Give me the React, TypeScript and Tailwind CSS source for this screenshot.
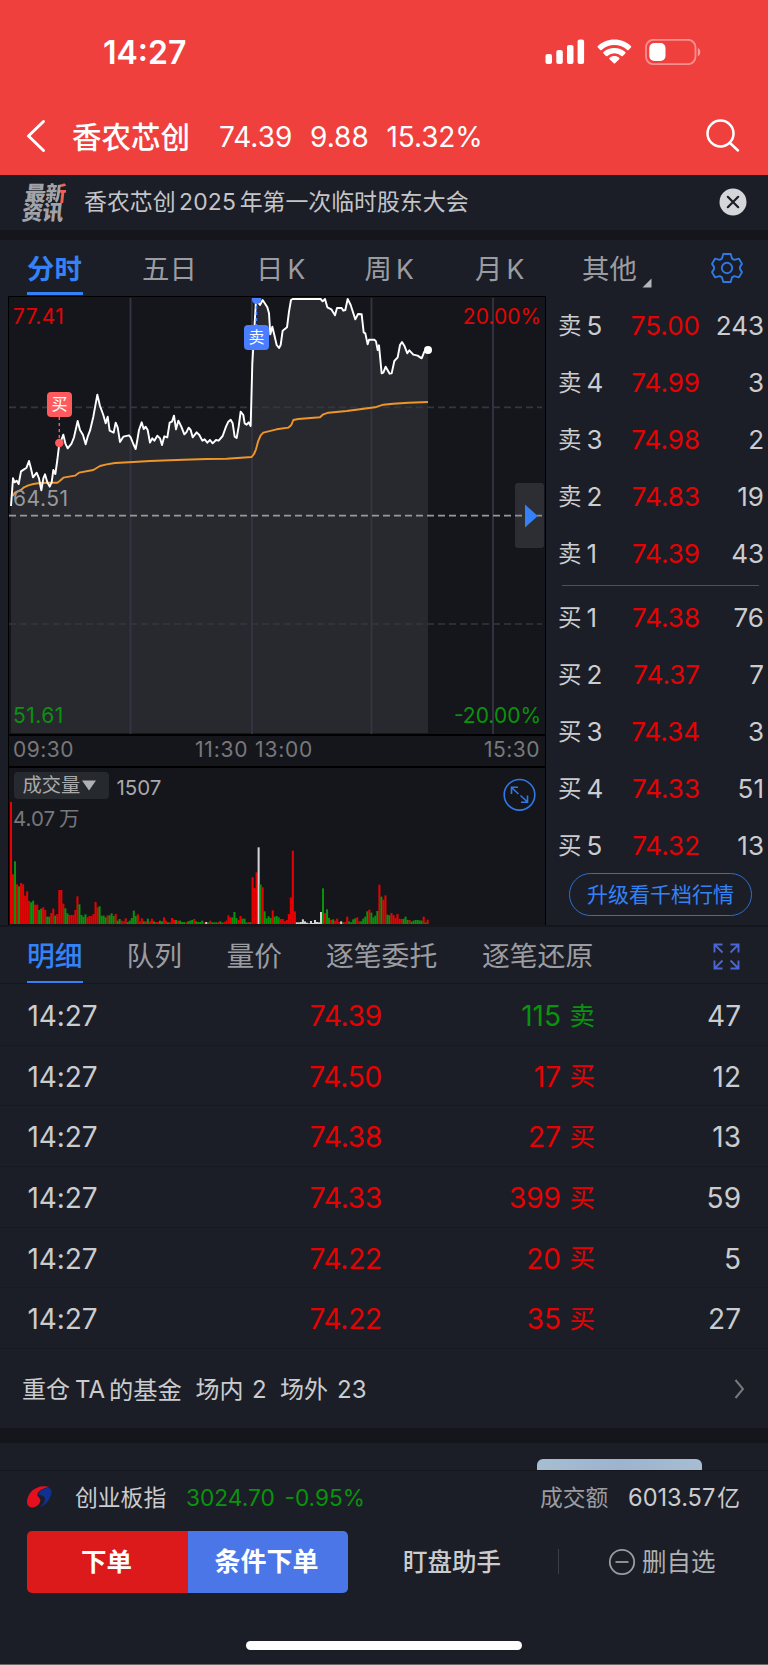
import type { ReactNode } from "react";

type Tone = "r" | "g" | "w";

const TONES: Record<Tone, string> = { r: "#e60202", g: "#0a930d", w: "#d3d4d6" };

/* Plot units are a third of a pixel. */
const PRICE =
  "33,828 39,745 44,757 50,752 56,762 63,724 72,718 79,714 87,693 92,712 99,742 110,728 117,745 124,781 130,745 135,733 142,757 149,770 155,757 160,720 166,732 172,690 178,640 184,630 190,614 196,640 203,655 214,642 222,622 233,573 240,600 245,608 249,615 257,643 263,620 270,602 280,560 292,494 300,528 310,555 317,580 323,560 329,602 341,608 347,578 353,592 360,636 370,620 387,616 392,622 400,642 407,657 412,630 417,600 425,577 431,597 437,590 443,600 450,638 457,625 463,632 472,617 480,625 486,645 493,619 502,622 509,578 516,575 522,557 528,598 535,572 544,590 553,613 559,607 566,593 572,600 578,622 590,607 598,615 607,632 614,628 622,638 630,630 638,640 648,630 656,632 668,618 678,590 685,575 692,569 698,580 704,620 710,624 716,590 722,545 730,555 734,580 740,584 746,577 752,588 757,400 760,350 768,210 780,225 788,210 802,232 807,250 811,313 817,290 823,315 830,345 837,354 842,345 848,302 861,292 867,245 873,210 878,207 962,207 968,214 975,207 982,232 994,238 1005,256 1011,234 1025,234 1030,242 1036,240 1043,207 1052,225 1066,268 1074,252 1085,253 1091,307 1096,310 1103,343 1107,329 1123,329 1128,334 1133,360 1137,346 1145,430 1150,428 1157,410 1169,431 1175,430 1183,393 1193,382 1200,345 1206,336 1213,347 1222,370 1228,361 1240,374 1253,377 1265,385 1273,365 1284,359";
const AVERAGE =
  "38,798 45,788 63,780 72,772 85,766 100,762 120,759 150,758 172,758 180,752 190,743 225,737 237,728 280,720 300,708 320,703 345,699 400,696 450,693 550,689 620,687 680,686 755,681 762,672 768,658 774,635 782,616 790,608 830,598 865,593 874,585 880,570 895,567 960,562 970,553 985,548 1040,543 1125,532 1150,524 1180,521 1225,518 1284,516";

const VOLUME =
  "r366 r149 g188 r119 g113 r123 r119 r85 r98 r69 g65 g70 r58 r58 g42 g46 r50 r42 g22 g22 r33 r46 g25 r30 r102 r102 r61 g47 g32 r27 r27 r27 r42 r83 g59 g27 g22 g29 r20 r24 r24 r30 r66 r50 g53 g25 g25 g20 r26 g26 g32 g24 r30 g10 g15 r10 r8 r17 g6 g10 g18 g40 g24 r29 r8 r17 g8 r8 g16 r8 r16 g8 r6 r6 g10 g8 r20 r10 g5 r5 r18 r12 g12 r10 g10 g6 g6 r5 g8 g10 g12 r15 g8 g6 g6 g10 r5 w6 g5 r10 g5 g5 g5 r6 g8 g4 r6 r10 r26 r20 g20 g36 g18 r12 r24 g16 g16 g5 r6 g5 r140 r108 r155 w230 g118 r110 g38 g17 g23 g18 r41 g22 g24 g20 r15 r15 r9 r12 r30 r80 r220 r38 w5 w5 w6 w14 w8 w4 w2 w9 w3 w12 w6 w5 w36 g107 r33 g44 g18 r12 g14 r10 r16 r6 w8 g5 r6 r22 g8 g5 g14 g17 r20 r8 g8 g16 g22 g38 r43 g34 g20 g25 g39 r118 g82 r73 r86 g28 g26 r33 r27 r18 r30 r16 r15 g15 g22 g12 r12 g7 g10 g12 g12 g11 g10 r22 g5 r13"
    .split(" ")
    .map((s) => ({ tone: s[0] as Tone, h: Number(s.slice(1)) / 3 }));

const ASKS = [
  ["卖", "5", "75.00", "243"],
  ["卖", "4", "74.99", "3"],
  ["卖", "3", "74.98", "2"],
  ["卖", "2", "74.83", "19"],
  ["卖", "1", "74.39", "43"],
];
const BIDS = [
  ["买", "1", "74.38", "76"],
  ["买", "2", "74.37", "7"],
  ["买", "3", "74.34", "3"],
  ["买", "4", "74.33", "51"],
  ["买", "5", "74.32", "13"],
];
const TICKS = [
  ["74.39", "115", "卖", "47"],
  ["74.50", "17", "买", "12"],
  ["74.38", "27", "买", "13"],
  ["74.33", "399", "买", "59"],
  ["74.22", "20", "买", "5"],
  ["74.22", "35", "买", "27"],
];

function StatusBar() {
  return (
    <div className="flex h-[98px] items-start pl-[103px] pt-[32px]">
      <span className="w-[442px] pt-px text-[32px] font-semibold leading-[40px]">14:27</span>
      <svg className="mt-[7px] h-[26px] w-[157px]" viewBox="0 0 157 26" fill="#fff">
        <rect x="0.5" y="15" width="6.5" height="10" rx="2" />
        <rect x="11.3" y="11" width="6.5" height="14" rx="2" />
        <rect x="22" y="6" width="6.5" height="19" rx="2" />
        <rect x="32.6" y="0.5" width="6.5" height="24.5" rx="2" />
        <path d="M69.4 0.500C62.900 0.500 57 2.900 52.900 7Q52.200 7.700 52.900 8.500L55.200 10.900Q55.900 11.500 56.600 10.900A19 19 0 0 1 82.200 10.900Q82.900 11.500 83.600 10.900L85.900 8.500Q86.600 7.700 85.900 7C81.800 2.900 75.900 0.500 69.400 0.500Z" />
        <path d="M69.4 9C65.200 9 61.400 10.500 58.500 13.100Q57.800 13.800 58.500 14.500L61 17Q61.700 17.500 62.400 17A10.500 10.500 0 0 1 76.400 17Q77.100 17.500 77.800 17L80.300 14.500Q81 13.800 80.300 13.100C77.400 10.500 73.600 9 69.400 9Z" />
        <path d="M69.4 17.100C67.600 17.100 66 17.700 64.600 18.800Q63.900 19.500 64.600 20.200L68.700 24.300Q69.400 24.900 70.100 24.300L74.200 20.200Q74.900 19.500 74.200 18.800C72.800 17.700 71.200 17.100 69.400 17.100Z" />
        <rect x="101" y="0.800" width="49.500" height="24.400" rx="7.500" fill="none" stroke="#fff" strokeOpacity="0.42" strokeWidth="1.800" />
        <path d="M152.800 8.700q2.600 1.200 2.600 4.300t-2.600 4.300z" fillOpacity="0.48" />
        <rect x="104.300" y="4" width="16.200" height="18" rx="5" />
      </svg>
    </div>
  );
}

function TitleBar() {
  return (
    <div className="flex h-[77px] items-center text-[28px] leading-[40px]">
      <svg className="mb-[2px] ml-[25px] h-[34px] w-[47px]" viewBox="0 0 47 34" fill="none" stroke="#fff" strokeWidth="3" strokeLinecap="round" strokeLinejoin="round">
        <path d="M18.500 2.500L3.500 17l15 14.500" />
      </svg>
      <span className="w-[147px] text-[29.500px] font-medium">香农芯创</span>
      <span className="w-[91px]">74.39</span>
      <span className="w-[76.500px]">9.88</span>
      <span className="w-[318.500px] tracking-[-0.1px]">15.32%</span>
      <svg className="mb-[2px] h-[36px] w-[36px]" viewBox="0 0 36 36" fill="none" stroke="#fff" strokeWidth="2.500" strokeLinecap="round">
        <circle cx="15.500" cy="15.500" r="13" />
        <path d="M25 25l8 7.500" />
      </svg>
    </div>
  );
}

function NewsBar() {
  return (
    <div className="flex h-[55px] items-center bg-[#1b1e27] pl-[23px] text-[#c4c5c8]">
      <div className="flex w-[61px] -skew-x-6 flex-col text-[21px] font-black leading-[19px] tracking-[-0.5px] text-[#a2a3a7]">
        <span className="pl-[1px]">
          最<span className="bg-linear-to-r from-[#a2a3a7] from-68% to-[#f2604f] to-68% bg-clip-text text-transparent">新</span>
        </span>
        <span>资讯</span>
      </div>
      <div className="flex w-[635px] pb-[2px] text-[22.900px] leading-[32px]">
        <span>香农芯创</span>
        <span className="mx-[3.500px] tracking-[0.2px]">2025</span>
        <span>年第一次临时股东大会</span>
      </div>
      <svg className="mb-px h-[28px] w-[28px]" viewBox="0 0 28 28">
        <circle cx="14" cy="14" r="13.500" fill="#d5d6da" />
        <path d="M8.800 8.800l10.400 10.400M19.200 8.800L8.800 19.200" stroke="#1b1e27" strokeWidth="2.200" strokeLinecap="round" />
      </svg>
    </div>
  );
}

function KTab({ c, className }: { c: string; className: string }) {
  return (
    <span className={`flex gap-[4px] ${className}`}>
      <span>{c}</span>
      <span className="text-[26.500px]">K</span>
    </span>
  );
}

function ChartTabs() {
  return (
    <div className="flex h-[56px] items-stretch bg-[#1b1e27] pl-[27px] text-[27.400px] leading-[58px] text-[#9b9ca0]">
      <div className="mr-[59px] flex w-[56px] flex-col">
        <span className="h-[52px] font-bold text-[#3482f6]">分时</span>
        <span className="h-[3px] bg-[#3482f6]" />
      </div>
      <span className="w-[114px]">五日</span>
      <KTab c="日" className="w-[108.500px]" />
      <KTab c="周" className="w-[110.500px]" />
      <KTab c="月" className="w-[107px]" />
      <span className="w-[60px]">其他</span>
      <svg className="mt-[38px] h-[10px] w-[10px]" viewBox="0 0 10 10" fill="#b5b6b9">
        <path d="M9.500 0.500v9h-9z" />
      </svg>
      <svg className="ml-[59px] mt-[12px] h-[32px] w-[32px]" viewBox="0 0 32 32" fill="none" stroke="#2f79e6" strokeWidth="1.900" strokeLinejoin="round">
        <path d="M12.300 2h7.400l1.300 4.600 2.300 1.300 4.700-1.200 3 5.200-2 3v2.200l2 3-3 5.200-4.700-1.200-2.300 1.300-1.300 4.600h-7.400l-1.300-4.600-2.300-1.300-4.700 1.200-3-5.200 2-3v-2.200l-2-3 3-5.200 4.700 1.200 2.300-1.300z" />
        <circle cx="16" cy="16" r="5.200" />
      </svg>
    </div>
  );
}

function Label({ className, children }: { className: string; children: ReactNode }) {
  return <span className={`absolute leading-[24px] ${className}`}>{children}</span>;
}

function PriceChart() {
  return (
    <div className="relative h-[437px] bg-[#15161b] text-[21px]">
      <svg className="block h-[437px] w-[536px]" viewBox="0 0 536 437" fill="none">
        <g transform="translate(-9 -67) scale(0.33333)">
          <polygon points={`33,1509 ${PRICE} 1284,1509`} fill="#28292e" />
        </g>
        <path d="M121.500 1v436M243 1v436M362.500 1v436M484 1v436" stroke="#343542" strokeWidth="1.800" />
        <path d="M0 110.400h533M0 327h533" stroke="#353640" strokeWidth="1.700" strokeDasharray="7 4" />
        <path d="M0 218.700h533" stroke="#98999c" strokeWidth="1.700" strokeDasharray="7 4" />
        <g transform="translate(-9 -67) scale(0.33333)" strokeLinejoin="round">
          <polyline points={AVERAGE} stroke="#ee962a" strokeWidth="5.800" />
          <polyline points={PRICE} stroke="#fff" strokeWidth="5.800" />
        </g>
        <circle cx="419" cy="53" r="4" fill="#fff" />
        <path d="M50.300 120v24" stroke="#ff5b5f" strokeWidth="1.400" strokeDasharray="3 3" />
        <circle cx="50.300" cy="146" r="4.200" fill="#ff5b5f" />
        <path d="M247.500 3v26" stroke="#4a7dff" strokeWidth="1.600" strokeDasharray="3 3" />
        <path d="M243 1h9.200v1.500a4.600 4.600 0 0 1-9.200 0z" fill="#4a7dff" />
      </svg>
      <span className="absolute left-[38px] top-[95px] h-[25px] w-[25px] rounded-[4px] bg-[#ff5b5f] text-center text-[16px] leading-[25px] text-white">买</span>
      <span className="absolute left-[235px] top-[28px] h-[25px] w-[25px] rounded-[4px] bg-[#4a7dff] text-center text-[16px] leading-[25px] text-white">卖</span>
      <Label className="left-[4px] top-[8px] tracking-[0.4px] text-[#e00404]">77.41</Label>
      <Label className="right-[4px] top-[8px] text-[#e00404]">20.00%</Label>
      <Label className="left-[4px] top-[190px] tracking-[0.5px] text-[#98999c]">64.51</Label>
      <Label className="left-[4px] top-[407px] tracking-[0.5px] text-[#0a930d]">51.61</Label>
      <Label className="right-[4px] top-[407px] text-[#0a930d]">-20.00%</Label>
      <span className="absolute right-[1px] top-[186px] flex h-[65px] w-[29px] items-center rounded-[3px] bg-[#77787c]/25 pl-[10px]">
        <svg className="h-[24px] w-[13px]" viewBox="0 0 13 24" fill="#3482f6">
          <path d="M0 0.500l12.800 11.500L0 23.500z" />
        </svg>
      </span>
    </div>
  );
}

function VolumeChart() {
  return (
    <div className="relative h-[157px] bg-[#15161b] text-[20.500px]">
      <svg className="block h-[157px] w-[536px]" viewBox="0 0 536 157">
        {VOLUME.map((b, i) => (
          <rect key={i} x={1 + i * 2.013} y={156 - b.h} width={b.tone === "g" ? 2 : 2.05} height={b.h} fill={TONES[b.tone]} />
        ))}
        <g fill="none" stroke="#2f79e6" strokeWidth="1.600">
          <circle cx="510.500" cy="26.800" r="15.300" />
          <path d="M509.500 26l-7-6.500M502.500 26v-6.800h6.500M511.500 27.500l7 6.500M518.500 27.500v6.800H512" />
        </g>
      </svg>
      <div className="absolute left-[4.500px] top-[4px] flex h-[27px] w-[95px] items-center rounded-[4px] bg-[#26292e] pl-[9px] text-[19.300px] text-[#a9aaac]">
        <span>成交量</span>
        <svg className="ml-[2px] h-[11px] w-[14px]" viewBox="0 0 14 11" fill="#b0b1b3">
          <path d="M0 0.500h14L7 10.500z" />
        </svg>
      </div>
      <Label className="left-[107.500px] top-[7.500px] text-[#a9aaac]">1507</Label>
      <Label className="left-[4px] top-[39px] flex gap-[4px] text-[#77787c]">
        <span>4.07</span>
        <span>万</span>
      </Label>
    </div>
  );
}

function BookRow({ row }: { row: string[] }) {
  return (
    <div className="flex h-[57px] items-center pr-[4px] text-[26px] leading-[57px] text-[#cbccce]">
      <span className="w-[28.500px] text-[23.500px]">{row[0]}</span>
      <span className="w-[31.500px]">{row[1]}</span>
      <span className="w-[82px] text-right text-[#e60202]">{row[2]}</span>
      <span className="flex-1 text-right">{row[3]}</span>
    </div>
  );
}

function OrderBook() {
  return (
    <div className="flex w-[222px] flex-col bg-[#1b1e27] pl-[12px] pt-[1px]">
      {ASKS.map((r) => (
        <BookRow key={r[1]} row={r} />
      ))}
      <div className="mb-[3px] ml-[4px] mt-[3px] h-[1px] w-[197px] bg-[#4b5060]" />
      {BIDS.map((r) => (
        <BookRow key={r[1]} row={r} />
      ))}
      <div className="-mt-px ml-[11px] h-[43px] w-[183px] shrink-0 rounded-full border border-[#2f6fcb] text-center text-[21px] leading-[41px] text-[#3482f6]">升级看千档行情</div>
    </div>
  );
}

function DetailTabs() {
  return (
    <div className="flex h-[57px] bg-[#1b1e27] pl-[27px] text-[27.800px] leading-[59px] text-[#9b9ca0]">
      <div className="mr-[43.500px] flex w-[56px] flex-col">
        <span className="h-[54px] font-medium text-[#3482f6]">明细</span>
        <span className="h-[3px] bg-[#3482f6]" />
      </div>
      <span className="w-[100px]">队列</span>
      <span className="w-[99.500px]">量价</span>
      <span className="w-[156px]">逐笔委托</span>
      <span className="w-[231px]">逐笔还原</span>
      <svg className="mt-[16px] h-[27px] w-[27px]" viewBox="0 0 27 27" fill="none" stroke="#4b64d6" strokeWidth="1.900">
        <path d="M1.500 9.500v-8h8M1.500 1.500l8 8M17.500 1.500h8v8M25.500 1.500l-8 8M1.500 17.500v8h8M1.500 25.500l8-8M25.500 17.500v8h-8M25.500 25.500l-8-8" />
      </svg>
    </div>
  );
}

function TickRow({ row }: { row: string[] }) {
  return (
    <div className="flex h-[60.700px] items-center border-b border-[#181a20] bg-[#1b1e27] pl-[27.500px] pt-[2px] text-[28px] text-[#cbccce]">
      <span className="w-[253.500px] tracking-[-0.1px]">14:27</span>
      <span className="w-[101px] text-right tracking-[-0.2px] text-[#e60202]">{row[0]}</span>
      <span className={`flex w-[213px] items-center justify-end ${row[2] === "卖" ? "text-[#0a930d]" : "text-[#e60202]"}`}>
        <span className="mr-[8.500px]">{row[1]}</span>
        <span className="text-[25.500px]">{row[2]}</span>
      </span>
      <span className="w-[146px] text-right">{row[3]}</span>
    </div>
  );
}

function FundRow() {
  return (
    <div className="flex h-[79px] items-center bg-[#1b1e27] pl-[22px] text-[24px] leading-[36px] text-[#cbccce]">
      <div className="flex w-[712px] pt-[2px]">
        <span className="w-[53px]">重仓</span>
        <span className="w-[34px]">TA</span>
        <span className="w-[86.500px] text-[24.300px]">的基金</span>
        <span className="w-[56.500px]">场内</span>
        <span className="w-[28px]">2</span>
        <span className="w-[57px]">场外</span>
        <span>23</span>
      </div>
      <svg className="h-[20px] w-[11px]" viewBox="0 0 11 20" fill="none" stroke="#77787c" strokeWidth="2">
        <path d="M1.500 1l7.500 9-7.500 9" />
      </svg>
    </div>
  );
}

function IndexBar() {
  return (
    <div className="flex h-[54px] items-center pl-[27px] text-[24px] text-[#cbccce]">
      <svg className="mb-[2px] h-[22px] w-[48px]" viewBox="0 0 48 22">
        <path d="M22.500 1C17-.800 8.500.500 4 6 .500 10-.800 15.500.500 18.500c1.500 3.500 6.500 3.800 10 1 3.500-3 3.500-6 1.500-8C10.500 10 9.800 8.500 11 6.800 13 3.800 18 1.700 22.500 1z" fill="#e60f1e" />
        <path d="M11 8.500C13 4 19.500 1 23 2.500c2.500 1.500 1.800 6-.5 10-2.300 4.300-6 7.800-9.500 8.700 3.500-3 5.500-7 4.800-9.200-.8-2.300-4-2.800-6.800-3.500z" fill="#10318f" />
      </svg>
      <span className="w-[111px] text-[22.800px]">创业板指</span>
      <span className="w-[98.500px] text-[22.700px] text-[#0a930d]">3024.70</span>
      <span className="w-[255.500px] text-[22.600px] text-[#0a930d]">-0.95%</span>
      <span className="w-[88px] text-[22.800px] text-[#9b9ca0]">成交额</span>
      <span className="text-[23.600px]">6013.57</span>
      <span className="ml-[2px] text-[22.800px]">亿</span>
    </div>
  );
}

function ActionBar() {
  return (
    <div className="flex h-[62px] items-center pl-[27px] text-[24.500px] leading-[62px] text-[#cbccce]">
      <span className="w-[161px] rounded-l-[5px] bg-[#dc1a1b] pr-[2px] text-center text-[25.500px] font-bold text-white">下单</span>
      <span className="w-[160px] rounded-r-[5px] bg-[#4a76e8] pr-[3px] text-center text-[26px] font-bold text-white">条件下单</span>
      <span className="ml-[55px] w-[154.500px] font-medium">盯盘助手</span>
      <span className="h-[25px] w-px bg-[#3b3e48]" />
      <svg className="ml-[49.500px] h-[28px] w-[34px]" viewBox="0 0 34 28" fill="none" stroke="#9b9ca0" strokeWidth="1.800">
        <circle cx="14" cy="14" r="12.200" />
        <path d="M7.500 14h13" />
      </svg>
      <span className="text-[#b0b1b3]">删自选</span>
    </div>
  );
}

export default function App() {
  return (
    <div className="flex h-[1665px] w-[768px] flex-col overflow-hidden whitespace-nowrap bg-[#1b1e27] font-['Inter','Noto_Sans_CJK_SC',sans-serif]">
      <header className="h-[175px] shrink-0 bg-[#ef403e] text-white">
        <StatusBar />
        <TitleBar />
      </header>
      <NewsBar />
      <div className="h-[10px] shrink-0 bg-[#15161b]" />
      <ChartTabs />
      <div className="flex h-[629px] shrink-0 pl-[8px]">
        <div className="flex w-[538px] flex-col border-x border-t border-black">
          <PriceChart />
          <div className="flex h-[34px] items-center justify-between border-y-[2px] border-black bg-[#15161b] pb-[2px] pl-[4px] pr-[5px] text-[21px] tracking-[0.5px] text-[#77787c]">
            <span className="w-[182px]">09:30</span>
            <span className="flex-1 tracking-[0.8px]">11:30 13:00</span>
            <span>15:30</span>
          </div>
          <VolumeChart />
        </div>
        <OrderBook />
      </div>
      <div className="h-[2px] shrink-0 bg-[#15161b]" />
      <DetailTabs />
      <div className="-mt-px h-[1px] shrink-0 bg-[#15161b]" />
      <div className="mt-px flex shrink-0 flex-col">
        {TICKS.map((r, i) => (
          <TickRow key={i} row={r} />
        ))}
      </div>
      <FundRow />
      <div className="h-[14.500px] shrink-0 bg-[#15161b]" />
      <div className="flex h-[28px] shrink-0 items-end border-b border-[#15161b] pl-[537px]">
        <div className="h-[11px] w-[165px] rounded-t-[6px] bg-linear-to-r from-[#a6bdd2] via-[#9db3cf] to-[#a6bdd2]" />
      </div>
      <IndexBar />
      <div className="h-[6px] shrink-0" />
      <ActionBar />
      <div className="mx-auto mt-[48px] h-[9px] w-[276px] shrink-0 rounded-full bg-white" />
      <div className="mt-auto h-px shrink-0 bg-[#6c666b]" />
    </div>
  );
}
